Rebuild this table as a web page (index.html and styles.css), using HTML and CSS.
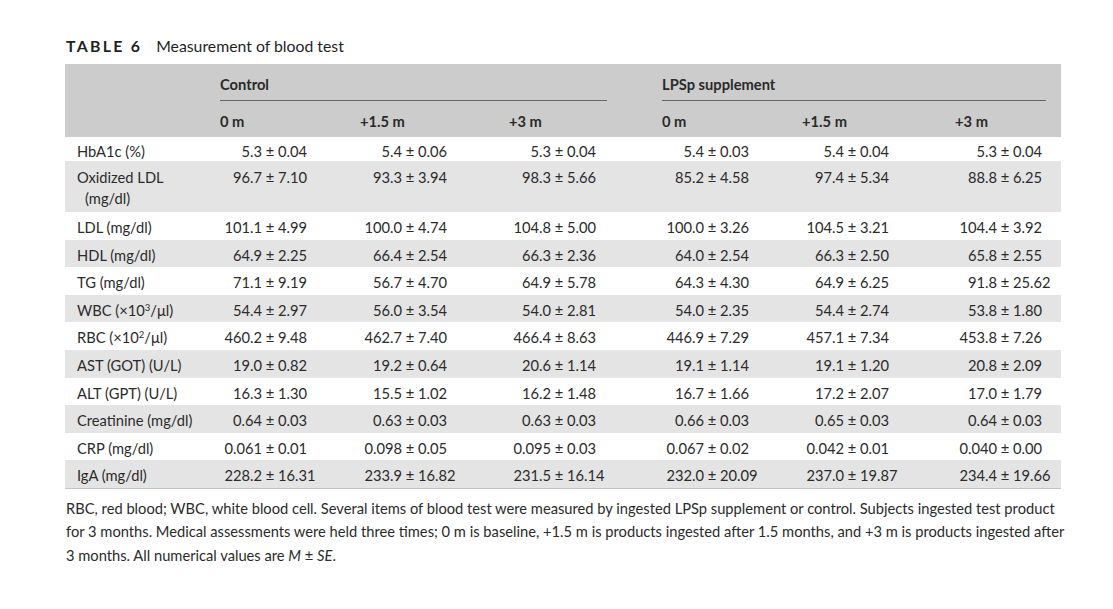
FILE: index.html
```html
<!DOCTYPE html>
<html lang="en">
<head>
<meta charset="utf-8">
<title>Table 6</title>
<link rel="stylesheet" href="styles.css">
</head>
<body>
<div class="page">
  <div class="caption"><span class="lbl">TABLE 6</span><span class="ttl">Measurement of blood test</span></div>
  <table class="data">
    <colgroup>
      <col class="c-label"><col class="c1"><col class="c2"><col class="c3"><col class="c4"><col class="c5"><col class="c6">
    </colgroup>
    <thead>
      <tr class="hr1">
        <th></th>
        <th colspan="3"><div class="grp grp-a">Control</div></th>
        <th colspan="3"><div class="grp grp-b">LPSp supplement</div></th>
      </tr>
      <tr class="hr2">
        <th></th>
        <th>0 m</th><th>+1.5 m</th><th>+3 m</th>
        <th>0 m</th><th>+1.5 m</th><th>+3 m</th>
      </tr>
    </thead>
    <tbody>
      <tr class="first"><td class="lab">HbA1c (%)</td>
        <td><span class="m">5.3</span> ± <span class="s">0.04</span></td>
        <td><span class="m">5.4</span> ± <span class="s">0.06</span></td>
        <td><span class="m">5.3</span> ± <span class="s">0.04</span></td>
        <td><span class="m">5.4</span> ± <span class="s">0.03</span></td>
        <td><span class="m">5.4</span> ± <span class="s">0.04</span></td>
        <td><span class="m">5.3</span> ± <span class="s">0.04</span></td></tr>
      <tr class="tall"><td class="lab hang">Oxidized LDL (mg/dl)</td>
        <td><span class="m">96.7</span> ± <span class="s">7.10</span></td>
        <td><span class="m">93.3</span> ± <span class="s">3.94</span></td>
        <td><span class="m">98.3</span> ± <span class="s">5.66</span></td>
        <td><span class="m">85.2</span> ± <span class="s">4.58</span></td>
        <td><span class="m">97.4</span> ± <span class="s">5.34</span></td>
        <td><span class="m">88.8</span> ± <span class="s">6.25</span></td></tr>
      <tr><td class="lab">LDL (mg/dl)</td>
        <td><span class="m">101.1</span> ± <span class="s">4.99</span></td>
        <td><span class="m">100.0</span> ± <span class="s">4.74</span></td>
        <td><span class="m">104.8</span> ± <span class="s">5.00</span></td>
        <td><span class="m">100.0</span> ± <span class="s">3.26</span></td>
        <td><span class="m">104.5</span> ± <span class="s">3.21</span></td>
        <td><span class="m">104.4</span> ± <span class="s">3.92</span></td></tr>
      <tr><td class="lab">HDL (mg/dl)</td>
        <td><span class="m">64.9</span> ± <span class="s">2.25</span></td>
        <td><span class="m">66.4</span> ± <span class="s">2.54</span></td>
        <td><span class="m">66.3</span> ± <span class="s">2.36</span></td>
        <td><span class="m">64.0</span> ± <span class="s">2.54</span></td>
        <td><span class="m">66.3</span> ± <span class="s">2.50</span></td>
        <td><span class="m">65.8</span> ± <span class="s">2.55</span></td></tr>
      <tr><td class="lab">TG (mg/dl)</td>
        <td><span class="m">71.1</span> ± <span class="s">9.19</span></td>
        <td><span class="m">56.7</span> ± <span class="s">4.70</span></td>
        <td><span class="m">64.9</span> ± <span class="s">5.78</span></td>
        <td><span class="m">64.3</span> ± <span class="s">4.30</span></td>
        <td><span class="m">64.9</span> ± <span class="s">6.25</span></td>
        <td><span class="m">91.8</span> ± <span class="s">25.62</span></td></tr>
      <tr><td class="lab">WBC (×10<sup>3</sup>/μl)</td>
        <td><span class="m">54.4</span> ± <span class="s">2.97</span></td>
        <td><span class="m">56.0</span> ± <span class="s">3.54</span></td>
        <td><span class="m">54.0</span> ± <span class="s">2.81</span></td>
        <td><span class="m">54.0</span> ± <span class="s">2.35</span></td>
        <td><span class="m">54.4</span> ± <span class="s">2.74</span></td>
        <td><span class="m">53.8</span> ± <span class="s">1.80</span></td></tr>
      <tr><td class="lab">RBC (×10<sup>2</sup>/μl)</td>
        <td><span class="m">460.2</span> ± <span class="s">9.48</span></td>
        <td><span class="m">462.7</span> ± <span class="s">7.40</span></td>
        <td><span class="m">466.4</span> ± <span class="s">8.63</span></td>
        <td><span class="m">446.9</span> ± <span class="s">7.29</span></td>
        <td><span class="m">457.1</span> ± <span class="s">7.34</span></td>
        <td><span class="m">453.8</span> ± <span class="s">7.26</span></td></tr>
      <tr><td class="lab">AST (GOT) (U/L)</td>
        <td><span class="m">19.0</span> ± <span class="s">0.82</span></td>
        <td><span class="m">19.2</span> ± <span class="s">0.64</span></td>
        <td><span class="m">20.6</span> ± <span class="s">1.14</span></td>
        <td><span class="m">19.1</span> ± <span class="s">1.14</span></td>
        <td><span class="m">19.1</span> ± <span class="s">1.20</span></td>
        <td><span class="m">20.8</span> ± <span class="s">2.09</span></td></tr>
      <tr><td class="lab">ALT (GPT) (U/L)</td>
        <td><span class="m">16.3</span> ± <span class="s">1.30</span></td>
        <td><span class="m">15.5</span> ± <span class="s">1.02</span></td>
        <td><span class="m">16.2</span> ± <span class="s">1.48</span></td>
        <td><span class="m">16.7</span> ± <span class="s">1.66</span></td>
        <td><span class="m">17.2</span> ± <span class="s">2.07</span></td>
        <td><span class="m">17.0</span> ± <span class="s">1.79</span></td></tr>
      <tr><td class="lab">Creatinine (mg/dl)</td>
        <td><span class="m">0.64</span> ± <span class="s">0.03</span></td>
        <td><span class="m">0.63</span> ± <span class="s">0.03</span></td>
        <td><span class="m">0.63</span> ± <span class="s">0.03</span></td>
        <td><span class="m">0.66</span> ± <span class="s">0.03</span></td>
        <td><span class="m">0.65</span> ± <span class="s">0.03</span></td>
        <td><span class="m">0.64</span> ± <span class="s">0.03</span></td></tr>
      <tr><td class="lab">CRP (mg/dl)</td>
        <td><span class="m">0.061</span> ± <span class="s">0.01</span></td>
        <td><span class="m">0.098</span> ± <span class="s">0.05</span></td>
        <td><span class="m">0.095</span> ± <span class="s">0.03</span></td>
        <td><span class="m">0.067</span> ± <span class="s">0.02</span></td>
        <td><span class="m">0.042</span> ± <span class="s">0.01</span></td>
        <td><span class="m">0.040</span> ± <span class="s">0.00</span></td></tr>
      <tr class="last"><td class="lab">IgA (mg/dl)</td>
        <td><span class="m">228.2</span> ± <span class="s">16.31</span></td>
        <td><span class="m">233.9</span> ± <span class="s">16.82</span></td>
        <td><span class="m">231.5</span> ± <span class="s">16.14</span></td>
        <td><span class="m">232.0</span> ± <span class="s">20.09</span></td>
        <td><span class="m">237.0</span> ± <span class="s">19.87</span></td>
        <td><span class="m">234.4</span> ± <span class="s">19.66</span></td></tr>
    </tbody>
  </table>
  <p class="note">RBC, red blood; WBC, white blood cell. Several items of blood test were measured by ingested LPSp supplement or control. Subjects ingested test product for 3 months. Medical assessments were held three times; 0 m is baseline, +1.5 m is products ingested after 1.5 months, and +3 m is products ingested after 3 months. All numerical values are <i>M</i> ± <i>SE</i>.</p>
</div>
</body>
</html>
```
FILE: styles.css
```css
html, body {
  margin: 0;
  padding: 0;
  background: #ffffff;
}
body {
  font-family: Lato, "Open Sans", sans-serif;
  color: #2b2b2b;
}
.page {
  width: 1000px;
  padding: 36px 0 0 65px;
}
.caption {
  font-size: 15.8px;
  line-height: 20px;
  color: #1f1f1f;
  padding-left: 1px;
  height: 28px;
}
.caption .lbl {
  font-weight: 700;
  letter-spacing: 2.3px;
  margin-right: 14px;
}
.data {
  border-collapse: collapse;
  table-layout: fixed;
  width: 996px;
  font-size: 14.7px;
  line-height: 20px;
}
.c-label { width: 155px; }
.c1 { width: 140px; }
.c2 { width: 149px; }
.c3 { width: 153px; }
.c4 { width: 140px; }
.c5 { width: 153px; }
.c6 { width: 106px; }
.data thead tr {
  background: #cccccc;
}
.data th {
  font-weight: 700;
  text-align: left;
  padding: 0;
  color: #2a2a2a;
}
.hr1 th {
  vertical-align: bottom;
  height: 37px;
}
.grp {
  padding: 10px 0 6px;
  border-bottom: 1.5px solid #666666;
}
.grp-a { margin-right: 55px; }
.grp-b { margin-right: 15px; }
.hr2 th {
  height: 36px;
  padding: 10px 0 6px;
  box-sizing: border-box;
}
.data td {
  padding: 5px 0 2.6px;
  white-space: nowrap;
  vertical-align: top;
}
.data tbody tr:nth-child(even) {
  background: #e4e4e4;
}
.data tbody tr.first td {
  padding-top: 4px;
  padding-bottom: 0;
}
.data tbody tr.tall td {
  padding-top: 6px;
}
.data tbody tr.last {
  border-bottom: 1px solid #c4c4c4;
}
.data td.lab {
  padding-left: 12px;
}
.data td.hang {
  white-space: normal;
  line-height: 21px;
  padding-left: 20px;
  padding-right: 30px;
  text-indent: -8px;
  padding-bottom: 3px;
}
.m {
  display: inline-block;
  width: 42px;
  text-align: right;
}
.s {
  display: inline-block;
  text-align: left;
}
sup {
  font-size: 9.5px;
  line-height: 0;
  vertical-align: 5px;
}
.note {
  margin: 8px 0 0 1px;
  width: 1000px;
  font-size: 14.7px;
  line-height: 23.5px;
  color: #2b2b2b;
}
```
